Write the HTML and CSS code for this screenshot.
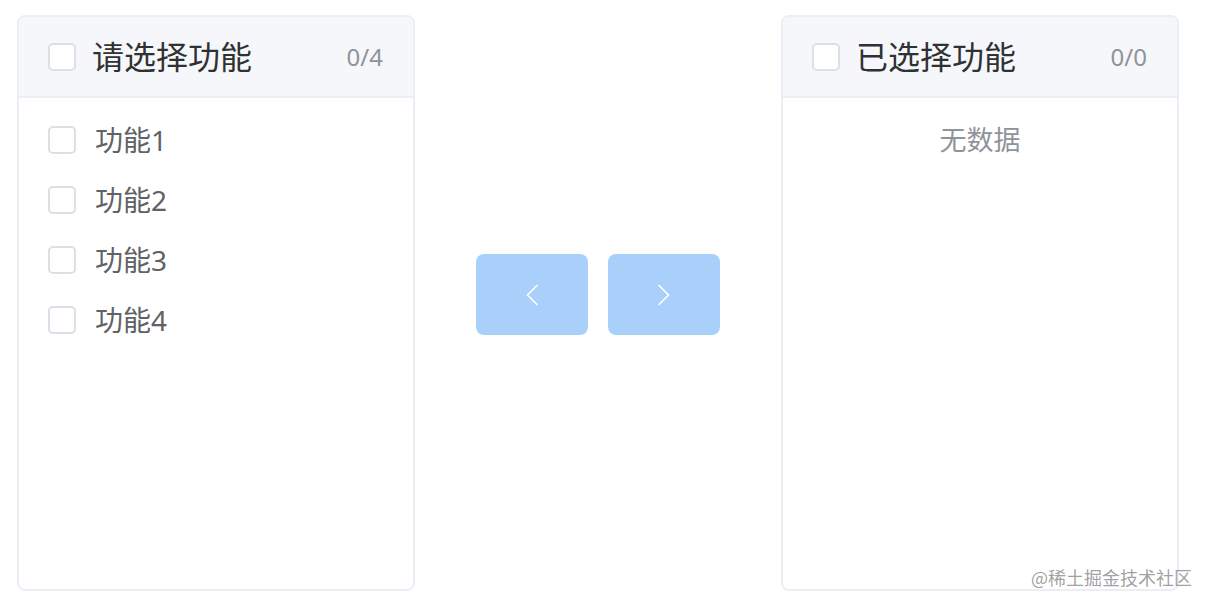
FILE: index.html
```html
<!DOCTYPE html>
<html lang="zh-CN">
<head>
<meta charset="utf-8">
<title>Transfer</title>
<link rel="stylesheet" href="styles.css">
</head>
<body>
<div class="transfer">
  <div class="panel">
    <div class="panel-header">
      <span class="box"></span>
      <span class="title">请选择功能</span>
      <span class="count">0/4</span>
    </div>
    <ul class="list">
      <li class="item"><span class="box"></span><span class="label">功能1</span></li>
      <li class="item"><span class="box"></span><span class="label">功能2</span></li>
      <li class="item"><span class="box"></span><span class="label">功能3</span></li>
      <li class="item"><span class="box"></span><span class="label">功能4</span></li>
    </ul>
  </div>
  <div class="buttons">
    <button class="btn" type="button" aria-label="左移">
      <svg width="14" height="22" viewBox="0 0 14 22"><path d="M12.5 1 L2.5 11 L12.5 21" fill="none" stroke="#fff" stroke-width="1.6"/></svg>
    </button>
    <button class="btn" type="button" aria-label="右移">
      <svg width="14" height="22" viewBox="0 0 14 22"><path d="M1.5 1 L11.5 11 L1.5 21" fill="none" stroke="#fff" stroke-width="1.6"/></svg>
    </button>
  </div>
  <div class="panel">
    <div class="panel-header">
      <span class="box"></span>
      <span class="title">已选择功能</span>
      <span class="count">0/0</span>
    </div>
    <p class="empty">无数据</p>
  </div>
</div>
<div class="watermark">@稀土掘金技术社区</div>
</body>
</html>
```

FILE: styles.css
```css
* { box-sizing: border-box; }
html, body { margin: 0; padding: 0; background: #fff; }
body {
  font-family: "Noto Sans", "Noto Sans CJK SC", sans-serif;
  width: 1210px;
  height: 606px;
  position: relative;
  overflow: hidden;
}
.transfer {
  display: flex;
  align-items: flex-start;
  padding: 15px 0 0 17px;
}
.panel {
  width: 398px;
  height: 576px;
  border: 2px solid #ebeef5;
  border-radius: 8px;
  background: #fff;
  overflow: hidden;
  flex: none;
}
.panel-header {
  height: 81px;
  background: #f5f7fa;
  border-bottom: 2px solid #ebeef5;
  display: flex;
  align-items: center;
  padding: 0 30px 0 29px;
}
.box {
  width: 28px;
  height: 28px;
  border: 2px solid #dcdfe6;
  border-radius: 5px;
  background: #fff;
  flex: none;
}
.title {
  margin-left: 16px;
  font-size: 32px;
  color: #303133;
  line-height: 40px;
  flex: 1;
}
.count {
  font-size: 24px;
  color: #909399;
  line-height: 30px;
}
.list {
  list-style: none;
  margin: 0;
  padding: 12px 0 0 0;
}
.item {
  height: 60px;
  display: flex;
  align-items: center;
  padding-left: 29px;
}
.label {
  margin-left: 19px;
  font-size: 28px;
  color: #606266;
  line-height: 60px;
}
.empty {
  margin: 0;
  padding-top: 12px;
  height: 72px;
  line-height: 60px;
  text-align: center;
  font-size: 27px;
  color: #909399;
}
.buttons {
  width: 366px;
  flex: none;
  display: flex;
  justify-content: center;
  gap: 20px;
  margin-top: 239px;
}
.btn {
  width: 112px;
  height: 81px;
  border: none;
  border-radius: 8px;
  background: #a8d0fa;
  display: flex;
  align-items: center;
  justify-content: center;
  padding: 0;
}
.watermark {
  position: absolute;
  right: 18px;
  top: 565px;
  font-size: 18px;
  line-height: 24px;
  color: rgba(130, 130, 130, 0.75);
  font-family: "Noto Sans CJK SC", sans-serif;
}
```
